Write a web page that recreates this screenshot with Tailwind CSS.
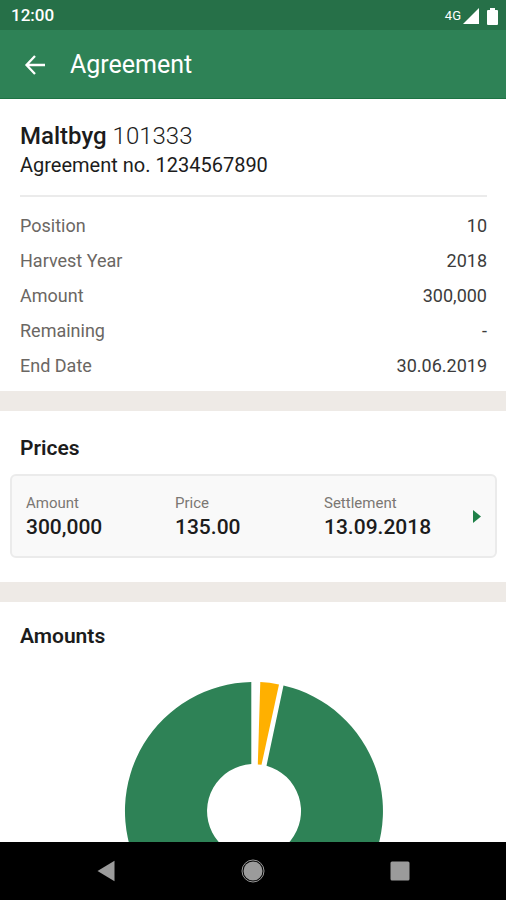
<!DOCTYPE html>
<html lang="en" class="h-full">
<head>
    <meta charset="UTF-8">
    <meta name="viewport" content="width=device-width, initial-scale=1.0">
    <title>Agreement</title>
    <script src="https://cdn.jsdelivr.net/npm/@tailwindcss/browser@4"></script>
</head>
<body class="h-full flex flex-col bg-white font-['Roboto',sans-serif] text-[#1c1c1c]">
    <!-- Status bar -->
    <div class="flex h-[30px] shrink-0 items-center justify-between bg-[#267048] pt-[2px] pl-[11px] pr-2 text-white">
        <span class="text-[17px] font-medium">12:00</span>
        <div class="flex items-center">
            <span class="mr-[2px] text-[13px]">4G</span>
            <svg class="mr-2 h-4 w-4" viewBox="0 0 16 16" fill="currentColor"><path d="M16 0V16H0Z"/></svg>
            <svg class="h-[17px] w-[11px]" viewBox="0 0 11 17" fill="currentColor"><path d="M3 0H8V2H10Q11 2 11 3V16Q11 17 10 17H1Q0 17 0 16V3Q0 2 1 2H3Z"/></svg>
        </div>
    </div>

    <!-- App bar -->
    <header class="flex h-[69px] shrink-0 items-center border-b border-[#1d7343] bg-[#2e8256] pt-[2px] pl-6 text-white">
        <button type="button" aria-label="Back" class="mr-6">
            <svg class="h-[22px] w-[22px]" viewBox="0 0 22 22" fill="none" stroke="currentColor" stroke-width="2.3"><path d="M21 11H3M11 2L2.500 11L11 20"/></svg>
        </button>
        <h1 class="text-[25px]">Agreement</h1>
    </header>

    <main class="min-h-0 flex-1 overflow-y-auto [scrollbar-width:none]">
        <section class="pt-[23px] pb-2 pl-5 pr-[19px]">
            <h2 class="text-[24px] leading-7"><span class="font-medium">Maltbyg</span> <span class="font-light">101333</span></h2>
            <p class="text-[20px] leading-[30px]">Agreement no. 1234567890</p>
            <hr class="mt-[15px] mb-[11px] border-t-2 border-[#ebebeb]">
            <dl class="text-[18px] leading-[35px]">
                <div class="flex justify-between">
                    <dt class="text-[#6b6763]">Position</dt>
                    <dd class="text-[#3c3c3c]">10</dd>
                </div>
                <div class="flex justify-between">
                    <dt class="text-[#6b6763]">Harvest Year</dt>
                    <dd class="text-[#3c3c3c]">2018</dd>
                </div>
                <div class="flex justify-between">
                    <dt class="text-[#6b6763]">Amount</dt>
                    <dd class="text-[#3c3c3c]">300,000</dd>
                </div>
                <div class="flex justify-between">
                    <dt class="text-[#6b6763]">Remaining</dt>
                    <dd class="text-[#3c3c3c]">-</dd>
                </div>
                <div class="flex justify-between">
                    <dt class="text-[#6b6763]">End Date</dt>
                    <dd class="text-[#3c3c3c]">30.06.2019</dd>
                </div>
            </dl>
        </section>

        <section class="border-t-[20px] border-[#eeeae6] pt-[23px] pb-6 pl-[10px] pr-[9px]">
            <h2 class="mb-3 px-[10px] text-[21px] leading-7 font-semibold">Prices</h2>
            <button type="button" class="flex h-[84px] w-full items-center rounded-md border-2 border-[#ebebeb] bg-[#f9f9f9] px-[14px] text-left">
                <span class="grid flex-1 grid-cols-3 pb-[2px]">
                    <span>
                        <span class="block text-[15px] leading-6 text-[#7b7773]">Amount</span>
                        <span class="block text-[21px] leading-6 font-medium">300,000</span>
                    </span>
                    <span>
                        <span class="block text-[15px] leading-6 text-[#7b7773]">Price</span>
                        <span class="block text-[21px] leading-6 font-medium">135.00</span>
                    </span>
                    <span>
                        <span class="block text-[15px] leading-6 text-[#7b7773]">Settlement</span>
                        <span class="block text-[21px] leading-6 font-medium">13.09.2018</span>
                    </span>
                </span>
                <svg class="h-[13px] w-2 text-[#1f8048]" viewBox="0 0 8 13" fill="currentColor"><path d="M0 0L8 6.500L0 13Z"/></svg>
            </button>
        </section>

        <section class="border-t-[20px] border-[#eeeae6] pt-5 pb-6 pl-5 pr-[19px]">
            <h2 class="mb-[31px] text-[21px] leading-7 font-semibold">Amounts</h2>
            <svg class="mx-auto h-[260px] w-[260px]" viewBox="0 0 260 260" role="img" aria-label="Amounts chart">
                <path fill="#2e8256" d="M159.500 4.400A129 129 0 1 1 127.300 1V83.100A47 47 0 1 0 142.500 84.700Z"/>
                <path fill="#ffb000" d="M136.300 1.100A129 129 0 0 1 155 3.400L137.500 83.800L133.800 83.600Z"/>
            </svg>
        </section>
    </main>

    <!-- System navigation -->
    <nav class="flex h-[58px] shrink-0 items-center justify-center gap-[123px] bg-black text-[#9b9b9b]">
        <button type="button" aria-label="Back">
            <svg class="h-6 w-6" viewBox="0 0 24 24" fill="currentColor"><path d="M3.500 12L20.500 1.800V22.200Z"/></svg>
        </button>
        <button type="button" aria-label="Home">
            <svg class="h-6 w-6" viewBox="0 0 24 24" fill="currentColor"><circle cx="12" cy="12" r="9.500"/><circle cx="12" cy="12" r="11" fill="none" stroke="currentColor" stroke-width="1"/></svg>
        </button>
        <button type="button" aria-label="Recents">
            <svg class="h-6 w-6" viewBox="0 0 24 24" fill="currentColor"><rect x="2.500" y="2.500" width="19" height="19" rx="1.500"/></svg>
        </button>
    </nav>
</body>
</html>
